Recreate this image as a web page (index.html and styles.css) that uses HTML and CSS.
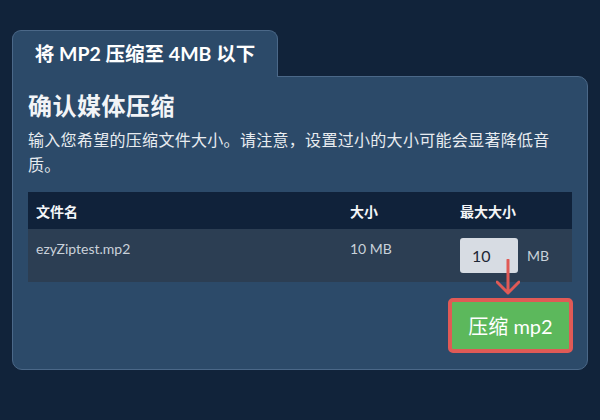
FILE: index.html
```html
<!DOCTYPE html>
<html lang="zh-CN">
<head>
<meta charset="utf-8">
<title>将 MP2 压缩至 4MB 以下</title>
<link rel="stylesheet" href="styles.css">
</head>
<body>
<div class="wrap">
  <div class="tab">将 MP2 压缩至 4MB 以下</div>
  <div class="panel">
    <h1 class="title">确认媒体压缩</h1>
    <p class="desc">输入您希望的压缩文件大小。请注意，设置过小的大小可能会显著降低音质。</p>
    <table class="files">
      <thead>
        <tr><th class="c-name">文件名</th><th class="c-size">大小</th><th class="c-max">最大大小</th></tr>
      </thead>
      <tbody>
        <tr>
          <td class="c-name">ezyZiptest.mp2</td>
          <td class="c-size">10 MB</td>
          <td class="c-max">
            <div class="maxcell">
              <div class="inwrap">
                <input class="num" type="text" value="10">
                <svg class="arrow" viewBox="0 0 24 36" width="24" height="36" aria-hidden="true">
                  <path d="M12 1 V34 M1 23 L12 34 L23 23" fill="none" stroke="#e05a56" stroke-width="3" stroke-linecap="round" stroke-linejoin="round"/>
                </svg>
              </div>
              <span class="unit">MB</span>
            </div>
          </td>
        </tr>
      </tbody>
    </table>
    <div class="actions">
      <button class="go">压缩 mp2</button>
    </div>
  </div>
</div>
</body>
</html>
```
FILE: styles.css
```css
html, body {
  margin: 0;
  padding: 0;
  background: #11233a;
}
body {
  font-family: Lato, "Noto Sans CJK SC", sans-serif;
  color: #eef2f6;
  width: 600px;
  height: 420px;
  overflow: hidden;
}
.wrap {
  padding: 30px 12px 0 12px;
}
.tab {
  position: relative;
  z-index: 1;
  display: inline-block;
  box-sizing: border-box;
  width: 266px;
  height: 47px;
  margin-bottom: -1px;
  padding-top: 9px;
  text-align: center;
  font-size: 19.5px;
  font-weight: 700;
  line-height: 28px;
  color: #ffffff;
  background: #2c4a69;
  border: 1px solid #4b6888;
  border-bottom: none;
  border-radius: 9px 9px 0 0;
}
.panel {
  box-sizing: border-box;
  width: 576px;
  height: 294px;
  padding: 14px 15px 0 15px;
  background: #2c4a69;
  border: 1px solid #4b6888;
  border-radius: 0 10px 10px 10px;
}
.title {
  margin: 0;
  font-size: 24px;
  font-weight: 700;
  line-height: 30px;
  color: #f2f4f7;
  letter-spacing: 0.5px;
}
.desc {
  margin: 6px 0 0 0;
  max-width: 530px;
  font-size: 16px;
  line-height: 25px;
  letter-spacing: 0.3px;
  color: #e8ecf0;
}
.files {
  width: 544px;
  margin-top: 15px;
  border-collapse: collapse;
  table-layout: fixed;
}
.files th,
.files td {
  box-sizing: border-box;
}
.files th {
  height: 37px;
  padding: 0 8px;
  text-align: left;
  font-size: 14px;
  font-weight: 700;
  color: #f4f6f8;
  background: #10223a;
  vertical-align: middle;
}
.files td {
  height: 53px;
  padding: 9px 8px 9px 8px;
  font-size: 14px;
  line-height: 22px;
  color: #c9d1da;
  background: #2c3e53;
  vertical-align: top;
}
.c-name { width: 314px; }
.c-size { width: 110px; }
.c-max { width: 120px; }
.maxcell {
  display: flex;
  align-items: center;
  gap: 9px;
}
.inwrap {
  position: relative;
  width: 58px;
  height: 35px;
}
.num {
  box-sizing: border-box;
  width: 58px;
  height: 35px;
  padding: 0 0 0 12px;
  border: none;
  border-radius: 3px;
  background: #d7dce3;
  font-family: Lato, "Noto Sans CJK SC", sans-serif;
  font-size: 16px;
  color: #1d2836;
  outline: none;
}
.arrow {
  position: absolute;
  left: 36px;
  top: 21px;
}
.unit {
  font-size: 14px;
  color: #c9d1da;
}
.actions {
  display: flex;
  justify-content: flex-end;
  margin-top: 16px;
}
.go {
  box-sizing: border-box;
  width: 125px;
  height: 55px;
  margin-right: -1px;
  border: 4px solid #e05a56;
  border-radius: 5px;
  background: #5cb85c;
  color: #ffffff;
  font-family: Lato, "Noto Sans CJK SC", sans-serif;
  font-size: 20px;
  cursor: pointer;
}
```
